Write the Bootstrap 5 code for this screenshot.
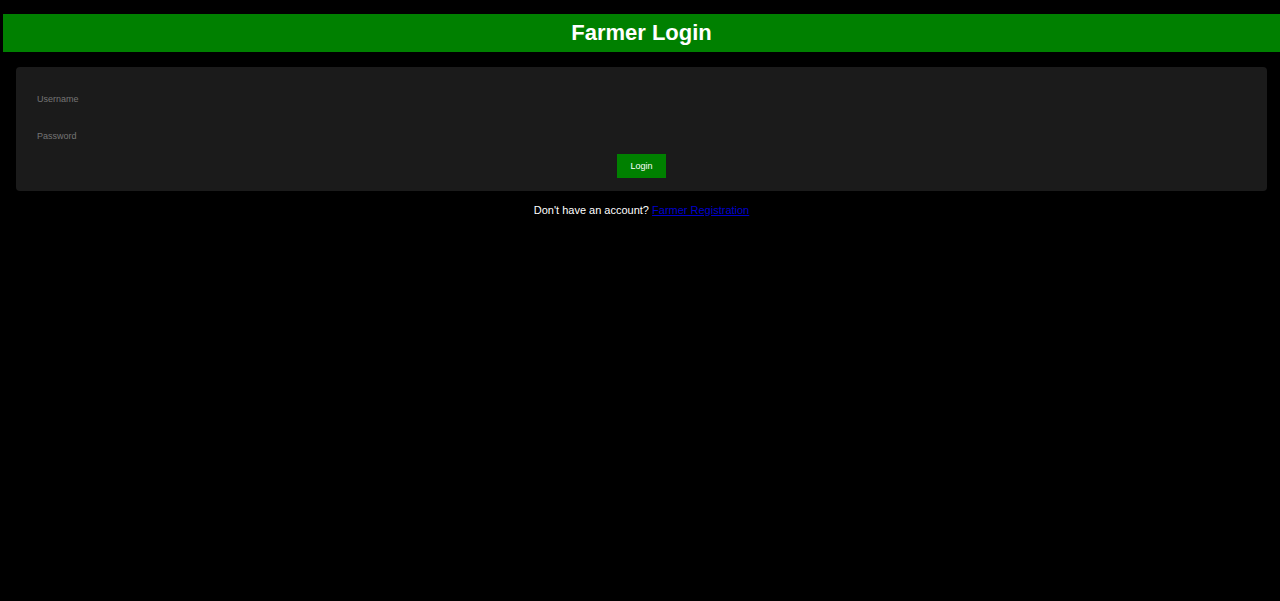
<!DOCTYPE html>
<html lang="en">
<head>
<meta charset="utf-8">
<meta name="viewport" content="width=device-width, initial-scale=1">
<title>Farmer Login</title>
<link href="https://cdn.jsdelivr.net/npm/bootstrap@5.3.0/dist/css/bootstrap.min.css" rel="stylesheet">
<style>
body { background: #000; color: #fff; font-family: "Liberation Sans", Arial, sans-serif; font-size: 11px; line-height: 13px; }
.page { padding: 14px 0 0 3px; }
.title-bar { background: #008000; font-size: 22px; line-height: 26px; padding: 6px; }
.login-panel { background: #1b1b1b; border-radius: 4px; margin: 15px 13px 13px; padding: 13px; }
.login-panel .form-control { background: transparent; border: 0; color: #fff; font-size: 9px; line-height: 13px; min-height: 0; padding: 13px 8px 11px; }
.login-panel .form-control::placeholder { color: #757575; }
.login-btn { background: #008000; border: 0; border-radius: 0; color: #fff; font-size: 9px; line-height: 12px; padding: 6px 13px; }
.login-btn:hover { background: #006400; color: #fff; }
.signup a { color: #0000cd; }
</style>
</head>
<body>
<main class="page">
<h1 class="title-bar text-center fw-bold m-0">Farmer Login</h1>
<form class="login-panel text-center">
<input class="form-control" id="username" type="text" placeholder="Username" aria-label="Username">
<input class="form-control" id="password" type="password" placeholder="Password" aria-label="Password">
<button class="btn login-btn" type="submit">Login</button>
</form>
<p class="signup text-center m-0">Don't have an account? <a href="#">Farmer Registration</a></p>
</main>
<script src="https://cdn.jsdelivr.net/npm/bootstrap@5.3.0/dist/js/bootstrap.bundle.min.js"></script>
</body>
</html>
